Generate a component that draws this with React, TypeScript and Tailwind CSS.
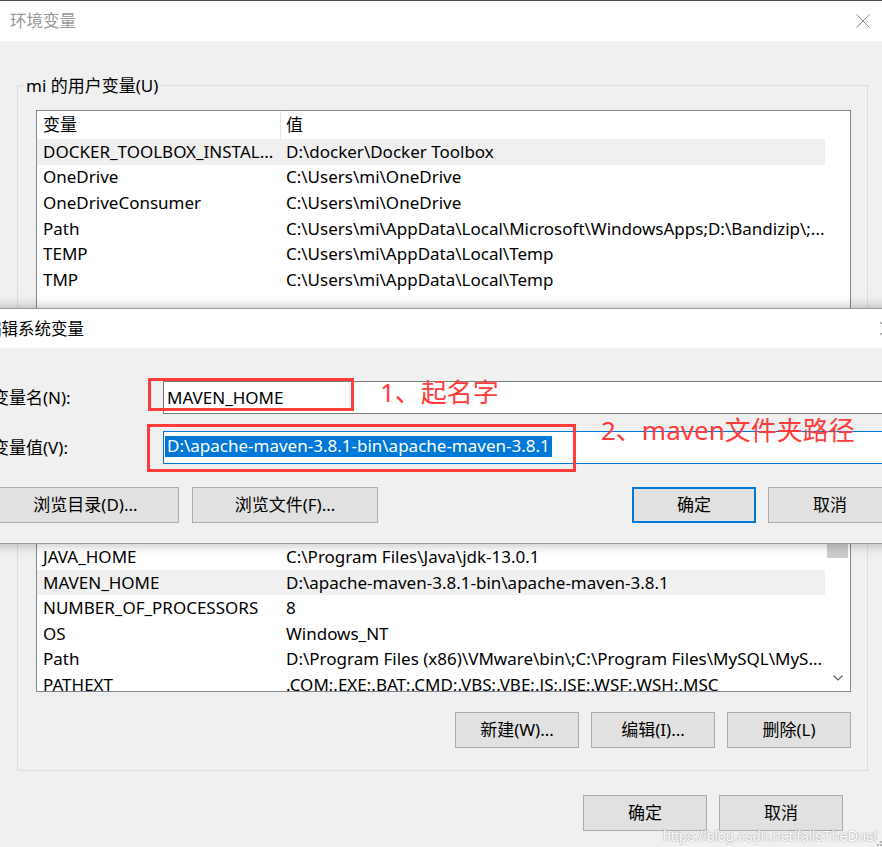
import type { ReactNode } from 'react';
import clsx from 'clsx';

type Row = [string, string];

const userVars: Row[] = [
  ['DOCKER_TOOLBOX_INSTAL...', 'D:\\docker\\Docker Toolbox'],
  ['OneDrive', 'C:\\Users\\mi\\OneDrive'],
  ['OneDriveConsumer', 'C:\\Users\\mi\\OneDrive'],
  ['Path', 'C:\\Users\\mi\\AppData\\Local\\Microsoft\\WindowsApps;D:\\Bandizip\\;...'],
  ['TEMP', 'C:\\Users\\mi\\AppData\\Local\\Temp'],
  ['TMP', 'C:\\Users\\mi\\AppData\\Local\\Temp'],
];

const systemVars: Row[] = [
  ['ComSpec', 'C:\\WINDOWS\\system32\\cmd.exe'],
  ['DriverData', 'C:\\Windows\\System32\\Drivers\\DriverData'],
  ['JAVA_HOME', 'C:\\Program Files\\Java\\jdk-13.0.1'],
  ['MAVEN_HOME', 'D:\\apache-maven-3.8.1-bin\\apache-maven-3.8.1'],
  ['NUMBER_OF_PROCESSORS', '8'],
  ['OS', 'Windows_NT'],
  ['Path', 'D:\\Program Files (x86)\\VMware\\bin\\;C:\\Program Files\\MySQL\\MyS...'],
  ['PATHEXT', '.COM;.EXE;.BAT;.CMD;.VBS;.VBE;.JS;.JSE;.WSF;.WSH;.MSC'],
];

const CloseIcon = ({ className }: { className?: string }) => (
  <svg viewBox="0 0 14 14" className={className} fill="none" stroke="currentColor" strokeWidth="1">
    <path d="M0.5 0.5 L13.5 13.5 M13.5 0.5 L0.5 13.5" />
  </svg>
);

const Button = ({ children, className, primary }: { children: ReactNode; className: string; primary?: boolean }) => (
  <div
    className={clsx(
      'flex items-center justify-center h-[36px] bg-[#e1e1e1] whitespace-nowrap',
      primary ? 'border-2 border-[#0078d7]' : 'border border-[#adadad]',
      className
    )}
  >
    {children}
  </div>
);

const VarList = ({
  rows,
  highlight,
  scrollbar,
  className,
}: {
  rows: Row[];
  highlight: number;
  scrollbar?: boolean;
  className: string;
}) => (
  <div className={clsx('flex w-[815px] border border-[#828790] bg-white overflow-hidden', className)}>
    <div className="w-[788px] shrink-0">
      <div className="flex h-[28px] items-center">
        <div className="w-[244px] h-full flex items-center pl-[6px] border-r border-[#e5e5e5]">变量</div>
        <div className="pl-[5px]">值</div>
      </div>
      {rows.map(([name, value], i) => (
        <div
          key={name + i}
          className={clsx('flex h-[25.6px] items-center whitespace-nowrap', i === highlight && 'bg-[#f0f0f0]')}
        >
          <div className="w-[244px] shrink-0 pl-[6px]">{name}</div>
          <div className="pl-[5px]">{value}</div>
        </div>
      ))}
    </div>
    {scrollbar && (
      <div className="flex-1 flex flex-col">
        <div className="h-[20px]" />
        <div className="h-[73px] mx-[2px] bg-[#cdcdcd]" />
        <div className="flex-1" />
        <div className="h-[26px] flex items-center justify-center">
          <svg viewBox="0 0 10 6" className="w-[10px] h-[6px]" fill="none" stroke="#606060" strokeWidth="1.2">
            <path d="M0.5 0.5 L5 5 L9.5 0.5" />
          </svg>
        </div>
      </div>
    )}
  </div>
);

export default function App() {
  return (
    <div className="relative w-[882px] h-[847px] overflow-hidden bg-[#f0f0f0] text-black text-[17px] leading-[22px] font-['Noto_Sans','Noto_Sans_CJK_SC',sans-serif]">
      <div className="h-px bg-[#4d4d4d]" />
      <div className="h-[40px] bg-white flex items-center justify-between pl-[10px] pr-[12px]">
        <span className="text-[#999999] text-[16.5px]">环境变量</span>
        <CloseIcon className="w-[14px] h-[14px] text-[#8a8a8a]" />
      </div>

      {/* 用户变量 */}
      <div className="ml-[17px] mt-[44px] w-[851px] h-[336px] border border-[#dcdcdc]">
        <div className="-mt-[12px] ml-[6px] w-fit px-[2px] h-[24px] flex items-center bg-[#f0f0f0]">
          mi 的用户变量(U)
        </div>
        <VarList rows={userVars} highlight={0} className="mt-[12px] ml-[18px] h-[212px]" />
      </div>

      {/* 系统变量 */}
      <div className="ml-[17px] mt-[18px] w-[851px] h-[332px] border border-[#dcdcdc] flex flex-col">
        <div className="-mt-[12px] ml-[6px] w-fit px-[2px] h-[24px] flex items-center bg-[#f0f0f0]">
          系统变量(S)
        </div>
        <VarList rows={systemVars} highlight={3} scrollbar className="mt-[12px] ml-[18px] h-[228px]" />
        <div className="mt-[20px] pr-[16px] flex justify-end gap-3">
          <Button className="w-[124px]">新建(W)...</Button>
          <Button className="w-[124px]">编辑(I)...</Button>
          <Button className="w-[124px]">删除(L)</Button>
        </div>
      </div>

      <div className="mt-[24px] pr-[39px] flex justify-end gap-3">
        <Button className="w-[124px]">确定</Button>
        <Button className="w-[124px]">取消</Button>
      </div>

      {/* 编辑系统变量 dialog */}
      <div className="absolute top-[308px] left-[-29px] w-[942px] border border-[#9a9a9a] bg-[#f0f0f0] shadow-[0_0_12px_rgba(0,0,0,0.3)]">
        <div className="h-[39px] bg-white flex items-center justify-between pl-[13px] pr-[19px]">
          <span className="text-[16.5px]">编辑系统变量</span>
          <CloseIcon className="w-[13px] h-[13px] text-[#333333]" />
        </div>
        <div className="px-[20px] pt-[33px] pb-[20px]">
          <div className="flex items-center h-[33px]">
            <div className="w-[171px] shrink-0">变量名(N):</div>
            <div className="flex-1 h-full flex items-center border border-[#7a7a7a] bg-white px-[3px]">
              MAVEN_HOME
            </div>
          </div>
          <div className="mt-[17px] flex items-center h-[33px]">
            <div className="w-[171px] shrink-0">变量值(V):</div>
            <div className="flex-1 h-full flex items-center border border-[#0078d7] bg-white px-[1px] pb-[3px]">
              <span className="bg-[#0078d7] text-white px-[2px] h-[21px] flex items-center whitespace-nowrap">
                D:\apache-maven-3.8.1-bin\apache-maven-3.8.1
              </span>
            </div>
          </div>
          <div className="mt-[23px] flex justify-between">
            <div className="flex gap-[13px]">
              <Button className="w-[187px]">浏览目录(D)...</Button>
              <Button className="w-[186px]">浏览文件(F)...</Button>
            </div>
            <div className="flex gap-3">
              <Button primary className="w-[124px]">确定</Button>
              <Button className="w-[124px]">取消</Button>
            </div>
          </div>
        </div>
      </div>

      {/* red annotations */}
      <div className="absolute left-[148px] top-[378px] w-[206px] h-[33px] border-[3px] border-[#ff3b3b]" />
      <div className="absolute left-[147px] top-[424px] w-[429px] h-[48px] border-[3px] border-[#ff3b3b]" />
      <div className="absolute left-[380px] top-[376px] h-[32px] leading-[32px] text-[26px] text-[#ff3b3b] whitespace-nowrap">
        1、起名字
      </div>
      <div className="absolute left-[601px] top-[414px] h-[32px] leading-[32px] text-[26px] text-[#ff3b3b] whitespace-nowrap">
        2、maven文件夹路径
      </div>

      {/* watermark */}
      <div className="absolute left-[663px] top-[826px] leading-[20px] text-[14.5px] text-white font-['Liberation_Sans',sans-serif] whitespace-nowrap [text-shadow:0_0_1.5px_rgba(0,0,0,0.5)]">
        https://blog.csdn.net/fallsTheDust
      </div>
      <svg viewBox="0 0 7 7" className="absolute right-0 bottom-0 w-[7px] h-[7px]" fill="#b5b5b5">
        <rect x="5" y="1" width="2" height="2" />
        <rect x="2" y="4" width="2" height="2" />
        <rect x="5" y="4" width="2" height="2" />
      </svg>
    </div>
  );
}
